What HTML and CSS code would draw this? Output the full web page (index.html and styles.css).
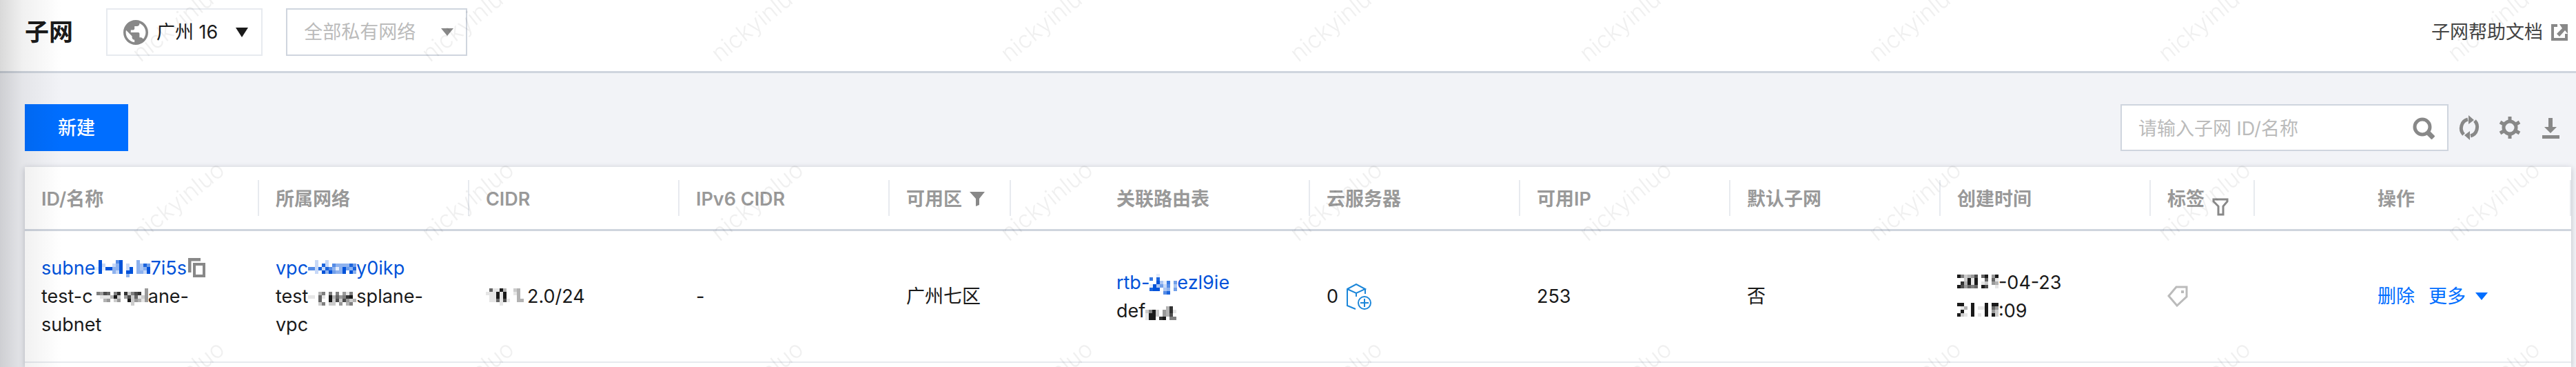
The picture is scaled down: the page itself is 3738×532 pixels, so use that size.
FILE: index.html
```html
<!DOCTYPE html>
<html lang="zh-CN">
<head>
    <meta charset="UTF-8">
    <title>子网</title>
    <link rel="stylesheet" href="styles.css">
</head>
<body>
    <header class="page-header">
        <h1>子网</h1>
        <button class="region-btn">
            <svg class="globe" viewBox="2 2 20 20"><path d="M12 2C6.48 2 2 6.48 2 12s4.480 10 10 10 10-4.480 10-10S17.520 2 12 2zm-1 17.930c-3.950-.49-7-3.850-7-7.930 0-.62.08-1.210.21-1.790L9 15v1c0 1.100.9 2 2 2v1.930zm6.900-2.540c-.26-.81-1-1.390-1.900-1.390h-1v-3c0-.55-.45-1-1-1H8v-2h2c.55 0 1-.45 1-1V7h2c1.100 0 2-.9 2-2v-.41c2.930 1.190 5 4.060 5 7.410 0 2.080-.8 3.970-2.100 5.390z"/></svg>
            <span>广州 16</span>
            <svg class="caret caret-lg" viewBox="0 0 18 14"><path d="M0 0h18l-9 14z"/></svg>
        </button>
        <div class="select-box">
            <select aria-label="私有网络">
                <option>全部私有网络</option>
            </select>
            <svg class="caret" viewBox="0 0 18 11"><path d="M0 0h18l-9 11z"/></svg>
        </div>
        <a class="help-link" href="#">
            子网帮助文档
            <svg class="icon-ext" viewBox="0 0 24 24"><path d="M9 2H2v20h20v-8" fill="none" stroke="currentColor" stroke-width="4"/><path d="M12 0h12v14l-4-5-8 9-4-4 8-8z"/></svg>
        </a>
    </header>

    <main>
        <div class="toolbar">
            <button class="create-btn">新建</button>
            <div class="search-box">
                <input type="text" placeholder="请输入子网 ID/名称" aria-label="搜索子网">
                <button class="icon-btn" aria-label="搜索">
                    <svg viewBox="0 0 32 32"><circle cx="14" cy="14" r="11" fill="none" stroke="currentColor" stroke-width="5"/><path d="M21 21l9 9" stroke="currentColor" stroke-width="7"/></svg>
                </button>
            </div>
            <div class="actions">
                <button class="icon-btn" aria-label="刷新">
                    <svg viewBox="0 0 32 36"><path d="M8 28A12 13 0 0 1 14 6M24 8A12 13 0 0 1 18 30" fill="none" stroke="currentColor" stroke-width="5"/><path d="M15 0l8 7-8 6zM17 36l-8-7 8-6z"/></svg>
                </button>
                <button class="icon-btn" aria-label="设置">
                    <svg viewBox="0 0 32 32"><circle cx="16" cy="16" r="9" fill="none" stroke="currentColor" stroke-width="5"/><path d="M16 0v6M16 26v6M2 8l5 3M25 21l5 3M2 24l5-3M25 11l5-3" stroke="currentColor" stroke-width="5"/></svg>
                </button>
                <button class="icon-btn" aria-label="下载">
                    <svg viewBox="0 0 32 32"><path d="M13 2h6v13h6l-9 9-9-9h6zM4 27h25v5H4z"/></svg>
                </button>
            </div>
        </div>

        <div class="card">
            <table class="subnet-table">
                <thead>
                    <tr>
                        <th><div class="th">ID/名称</div></th>
                        <th><div class="th">所属网络</div></th>
                        <th><div class="th">CIDR</div></th>
                        <th><div class="th">IPv6 CIDR</div></th>
                        <th><div class="th th-filter">可用区 <svg class="filter-solid" viewBox="0 0 22 21"><path d="M0 0h22l-8 10v9l-5 2V10z"/></svg></div></th>
                        <th><div class="th">关联路由表</div></th>
                        <th><div class="th">云服务器</div></th>
                        <th><div class="th">可用IP</div></th>
                        <th><div class="th">默认子网</div></th>
                        <th><div class="th">创建时间</div></th>
                        <th><div class="th th-filter">标签 <svg class="filter-line" viewBox="0 0 24 26"><path d="M2 2h20v3l-6 7v12H9V12L2 5z" fill="none" stroke="currentColor" stroke-width="3"/></svg></div></th>
                        <th><div class="th">操作</div></th>
                    </tr>
                </thead>
                <tbody>
                    <tr>
                        <td>
                            <a href="#">subne<svg class="mosaic" data-cells="0900006900004000 0920024902004385 1919944902904349 0900042909904429 0000000004000000"></svg>7i5s</a><button class="copy-btn" aria-label="复制"><svg viewBox="0 0 25 28"><path d="M2 21V2h16" fill="none" stroke="currentColor" stroke-width="5"/><path d="M9 9h14v17H9z" fill="none" stroke="currentColor" stroke-width="4"/></svg></button><br>
                            test-c<svg class="mosaic" data-cells="0000000000000004 0547605808257804 0011139204726124 0003402400924314 0000000000020000"></svg>ane-<br>
                            subnet
                        </td>
                        <td>
                            <a href="#">vpc<svg class="mosaic" data-cells="00200200000000 00208206444485 66282864149548 00209495449094 00000000000000"></svg>y0ikp</a><br>
                            test<svg class="mosaic" data-cells="00000000000000 00035050504150 11061093645890 00060092727423 00025022040350"></svg>splane-<br>
                            vpc
                        </td>
                        <td><svg class="mosaic" data-cells="061193002300 111919001300 011919000300 011617100330 000010000000"></svg>2.0/24</td>
                        <td>-</td>
                        <td>广州七区</td>
                        <td>
                            <a href="#">rtb-<svg class="mosaic mosaic-tall" data-cells="00100000 70800000 00931705 19352603 89903405 00006800"></svg>ezl9ie</a><br>
                            def<svg class="mosaic" data-cells="000000000 000000380 259204381 199204370 199089055"></svg>
                        </td>
                        <td>
                            <div class="server">0
                                <svg class="server-icon" viewBox="0 0 36 38"><path d="M1 8L14 1l13 7-13 6zM1 8v24l12 5M27 8v7M14 14v5" fill="none" stroke="currentColor" stroke-width="2"/><circle cx="26" cy="28" r="9" fill="none" stroke="currentColor" stroke-width="2"/><path d="M20 28h12M26 22v12" stroke="currentColor" stroke-width="2"/></svg>
                            </div>
                        </td>
                        <td>253</td>
                        <td>否</td>
                        <td>
                            <svg class="mosaic" data-cells="952347069049 002919006061 083919012043 974656097001 000000000000"></svg>-04-23<br>
                            <svg class="mosaic" data-cells="990090009099 013090119064 090090009042 921090109092 000000000000"></svg>:09
                        </td>
                        <td><svg class="tag-icon" viewBox="0 0 30 31"><path d="M13 2h15v14L14 29 2 15z" fill="none" stroke="currentColor" stroke-width="3"/><path d="M20 7h4v4h-4z"/></svg></td>
                        <td>
                            <div class="ops">
                                <button>删除</button>
                                <button>更多 <svg class="caret" viewBox="0 0 18 11"><path d="M0 0h18l-9 11z"/></svg></button>
                            </div>
                        </td>
                    </tr>
                </tbody>
            </table>
        </div>
    </main>

    <div class="side-shadow"></div>
    <svg class="watermark">
        <defs>
            <pattern id="wm" width="420" height="260" patternUnits="userSpaceOnUse" y="93">
                <text transform="translate(204 258) rotate(-39)">nickyinluo</text>
            </pattern>
        </defs>
        <rect width="100%" height="100%" fill="url(#wm)"/>
    </svg>

    <script src="mosaic.js"></script>
</body>
</html>
```
FILE: styles.css
```css
:root {
    --blue: #006eff;
    --link: #0052d9;
    --text: #1a1a1a;
    --muted: #888;
    --border: #cfd5de;
    --line: #e7eaef;
    --bg: #f2f3f7;
}

* { box-sizing: border-box; margin: 0; padding: 0; }

body {
    font-family: Inter, "Noto Sans CJK SC", sans-serif;
    font-size: 27px;
    line-height: 41px;
    color: var(--text);
    background: var(--bg);
    min-height: 100vh;
    display: flex;
    flex-direction: column;
    position: relative;
}

button, input, select {
    font: inherit;
    color: inherit;
    background: none;
    border: none;
    border-radius: 0;
}

button { cursor: pointer; }
a { color: var(--link); text-decoration: none; }
svg { fill: currentColor; }

.page-header {
    display: flex;
    align-items: center;
    padding: 12px 12px 22px 36px;
    background: #fff;
    border-bottom: 3px solid var(--border);
}

.page-header h1 {
    font-size: 35px;
    font-weight: 700;
    margin-right: 48px;
}

.region-btn {
    display: flex;
    align-items: center;
    height: 69px;
    padding: 0 19px 0 23px;
    border: 2px solid var(--line);
    margin-right: 34px;
}

.globe {
    width: 36px;
    height: 36px;
    margin-right: 12px;
    color: var(--muted);
}

.caret {
    width: 18px;
    height: 11px;
}

.caret-lg {
    height: 14px;
    margin-left: 26px;
}

.select-box { position: relative; }

.select-box select {
    appearance: none;
    width: 263px;
    height: 69px;
    padding: 0 24px;
    border: 2px solid var(--border);
    background: #fff;
    color: #bbb;
}

.select-box .caret {
    position: absolute;
    right: 20px;
    top: 29px;
    color: var(--muted);
    pointer-events: none;
}

.help-link {
    display: flex;
    align-items: center;
    gap: 12px;
    margin-left: auto;
    color: #444;
}

.icon-ext {
    width: 24px;
    height: 24px;
    color: var(--muted);
}

main {
    flex-grow: 1;
    display: flex;
    flex-direction: column;
    padding: 45px 7px 0 36px;
}

.toolbar {
    display: flex;
    align-items: center;
    padding-right: 14px;
    margin-bottom: 23px;
}

.create-btn {
    width: 150px;
    height: 68px;
    background: var(--blue);
    color: #fff;
    font-weight: 500;
}

.search-box {
    display: flex;
    align-items: center;
    width: 476px;
    height: 68px;
    margin: 0 14px 0 auto;
    padding: 2px 18px 0 24px;
    background: #fff;
    border: 2px solid var(--border);
}

.search-box input {
    flex-grow: 1;
    min-width: 0;
    outline: none;
}

.search-box input::placeholder { color: #bbb; }

.actions {
    display: flex;
    gap: 27px;
}

.icon-btn {
    display: flex;
    align-items: center;
    width: 32px;
    height: 36px;
    color: var(--muted);
}

.icon-btn svg { width: 32px; }

.card {
    flex-grow: 1;
    background: #fff;
    box-shadow: 0 2px 8px rgba(54, 58, 80, 0.3);
}

.subnet-table {
    width: 100%;
    table-layout: fixed;
    border-collapse: separate;
    border-spacing: 0;
}

.subnet-table th {
    padding: 19px 0;
    text-align: left;
    font-weight: 600;
    line-height: 52px;
    color: #999;
    border-bottom: 3px solid var(--border);
}

.subnet-table th:first-child { width: 9.2%; }

.th {
    display: flex;
    align-items: center;
    height: 52px;
    padding: 3px 0 0 24px;
    border-right: 2px solid var(--line);
}

.th-filter {
    width: fit-content;
    gap: 11px;
    padding-right: 36px;
}

.filter-solid {
    width: 22px;
    height: 21px;
    color: var(--muted);
}

.filter-line {
    width: 24px;
    height: 26px;
    color: var(--muted);
    align-self: flex-end;
}

.subnet-table td {
    padding: 33px 24px;
    vertical-align: middle;
    border-bottom: 2px solid var(--line);
    white-space: nowrap;
}

/* pixelated part of a masked id */
.mosaic {
    vertical-align: -4px;
    shape-rendering: crispEdges;
}

.mosaic-tall { vertical-align: -8px; }

.copy-btn {
    margin-left: 2px;
    line-height: 28px;
    color: var(--muted);
}

.copy-btn svg {
    width: 25px;
    height: 28px;
    vertical-align: -4px;
}

.server {
    display: flex;
    align-items: center;
    gap: 12px;
}

.server-icon {
    width: 36px;
    height: 38px;
    color: #1b86d9;
}

.tag-icon {
    display: block;
    width: 30px;
    height: 31px;
    color: #bbb;
}

.ops {
    display: flex;
    gap: 20px;
    color: var(--blue);
}

.ops button {
    display: flex;
    align-items: center;
    gap: 14px;
}

.side-shadow {
    position: absolute;
    inset: 0 auto 0 0;
    width: 90px;
    background: linear-gradient(to right, rgba(0, 0, 0, 0.15), rgba(0, 0, 0, 0.06) 36%, transparent);
    pointer-events: none;
}

.watermark {
    position: absolute;
    inset: 0;
    width: 100%;
    height: 100%;
    pointer-events: none;
}

.watermark text {
    font-size: 34px;
    font-weight: 300;
    fill: rgba(0, 0, 0, 0.06);
}
```
FILE: mosaic.js
```js
// Each digit of data-cells is one 5px cell, 0 (clear) to 9 (solid).
const CELL = 5;

document.querySelectorAll('.mosaic').forEach(svg => {
    const rows = svg.dataset.cells.split(' ');
    svg.setAttribute('width', rows[0].length * CELL);
    svg.setAttribute('height', rows.length * CELL);

    rows.forEach((row, y) => {
        [...row].forEach((level, x) => {
            if (level === '0') return;
            const rect = document.createElementNS('http://www.w3.org/2000/svg', 'rect');
            rect.setAttribute('x', x * CELL);
            rect.setAttribute('y', y * CELL);
            rect.setAttribute('width', CELL);
            rect.setAttribute('height', CELL);
            rect.setAttribute('fill-opacity', level / 9);
            svg.appendChild(rect);
        });
    });
});
```
